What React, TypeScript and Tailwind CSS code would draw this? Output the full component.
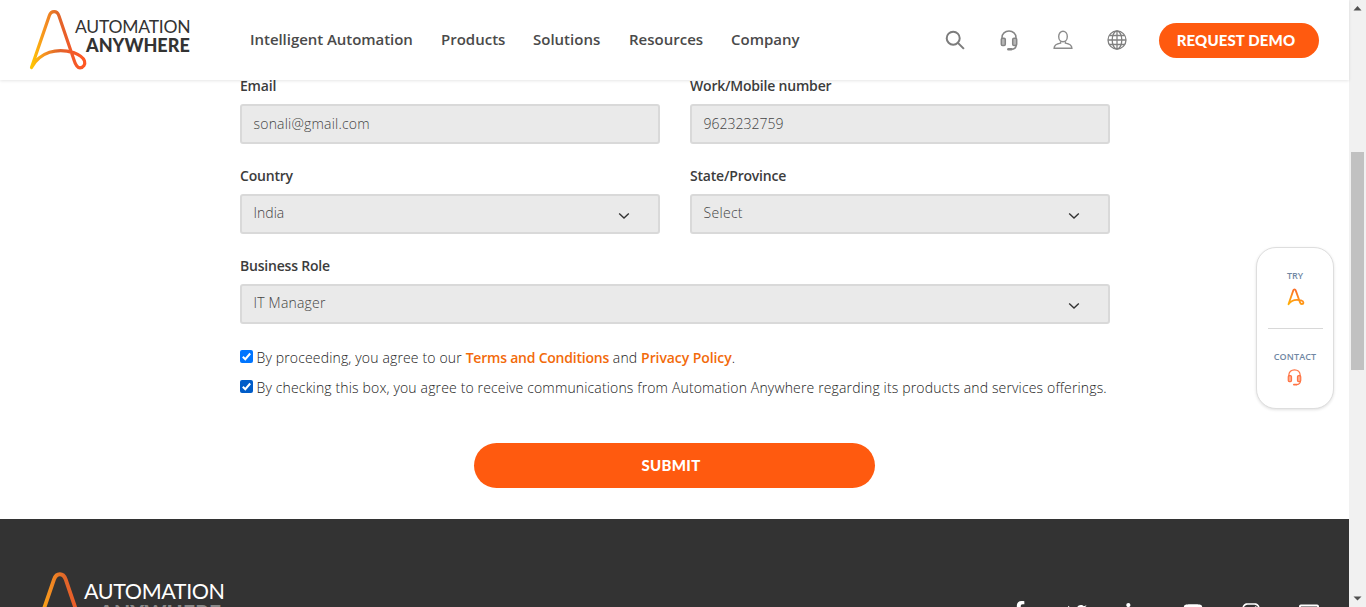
import React from "react";
import { FaFacebookF, FaTwitter, FaLinkedinIn, FaYoutube, FaInstagram, FaRegEnvelope } from "react-icons/fa";

function Mark({ className, id, width = 3.2 }: { className: string; id: string; width?: number }) {
  return (
    <svg className={className} viewBox="0 0 58 60" fill="none">
      <defs>
        <linearGradient id={id} x1="2" y1="0" x2="56" y2="0" gradientUnits="userSpaceOnUse">
          <stop offset="0" stopColor="#ffc800" />
          <stop offset="0.25" stopColor="#f69220" />
          <stop offset="0.5" stopColor="#e0662a" />
          <stop offset="0.75" stopColor="#f15a29" />
          <stop offset="1" stopColor="#ff5722" />
        </linearGradient>
      </defs>
      <path
        d="M2.500 57.500 L20.200 6 C22.200 0.200 28 0.200 30 6 L45 50 C46.500 55 48 57.800 51 57.800 C54.500 57.800 56.500 54.500 55.500 51 C54.100 46.800 50 44.800 44.500 42.600 C28 37.500 11 42 2.500 57.500 Z"
        stroke={`url(#${id})`}
        strokeWidth={width}
        strokeLinejoin="round"
      />
    </svg>
  );
}

function TryMark() {
  return (
    <svg className="mt-[6px] ml-px h-[18px] w-[18px]" viewBox="0 0 18 18" fill="none" stroke="url(#tryFill)" strokeWidth="1.800" strokeLinejoin="round">
      <defs>
        <linearGradient id="tryFill" x1="0" y1="18" x2="8" y2="0" gradientUnits="userSpaceOnUse">
          <stop offset="0" stopColor="#ffb800" />
          <stop offset="0.6" stopColor="#ff8a1c" />
          <stop offset="1" stopColor="#f9692c" />
        </linearGradient>
      </defs>
      <path d="M1.500 16.300 6.300 2.400c.5-1.500 1.900-1.500 2.400 0l4.200 11.700c.4 1.200 1 1.900 1.900 1.900.9 0 1.600-.7 1.600-1.600 0-1-1-1.600-2.400-2C9 11.100 4.500 11.900 1.500 16.300Z" />
    </svg>
  );
}

function Headset({ className }: { className: string }) {
  return (
    <svg className={className} viewBox="0 0 18 21" fill="none" stroke="currentColor" strokeWidth="1.500">
      <path d="M2 9V7.600C2 3.700 5 1 9 1s7 2.700 7 6.600V9" />
      <rect x="1.300" y="8.300" width="4" height="7.200" rx="1.300" fill="currentColor" fillOpacity="0.6" />
      <rect x="12.700" y="8.300" width="4" height="7.200" rx="1.300" fill="currentColor" fillOpacity="0.6" />
      <path d="M16.300 14.500c0 3-1.800 4.800-5.300 4.800" />
      <path d="M8.300 19.300h3" strokeWidth="2.400" strokeLinecap="round" />
    </svg>
  );
}

function Chevron() {
  return (
    <svg className="mt-[3px] h-[8px] w-[12px]" viewBox="0 0 12 8" fill="none" stroke="#333" strokeWidth="1.400">
      <path d="M1.200 1.500 6 6l4.800-4.500" />
    </svg>
  );
}

function Field({ label, value, select, className = "", valueClass = "" }: { label: string; value: string; select?: boolean; className?: string; valueClass?: string }) {
  return (
    <div className={className}>
      <div className="h-5 text-[14px] leading-5 font-semibold tracking-[-0.200px] whitespace-nowrap text-[#3c3c3c]">{label}</div>
      <div className="mt-2 flex h-10 items-center justify-between rounded-[3px] border-2 border-[#d9d9d9] bg-[#eaeaea] pr-[28px] pl-[11.5px] text-[14px] leading-5 font-light text-[#444]">
        <span className={`${select ? "pb-[2px]" : ""} ${valueClass}`}>{value}</span>
        {select && <Chevron />}
      </div>
    </div>
  );
}

function Check({ color }: { color: string }) {
  return (
    <svg className="mt-[3px] mr-[3.5px] h-[13px] w-[13px] shrink-0" viewBox="0 0 13 13">
      <rect width="13" height="13" rx="2" fill={color} />
      <path d="M2.800 6.700 5.300 9.200 10.200 3.500" fill="none" stroke="#fff" strokeWidth="2" />
    </svg>
  );
}

export default function App() {
  return (
    <div className="flex h-[607px] w-[1366px] overflow-hidden bg-white font-['Open_Sans','Noto_Sans',sans-serif]">
      <div className="relative flex h-full w-[1349px] flex-col">
        <header className="relative z-10 flex h-20 shrink-0 items-center bg-white pl-[29px] shadow-[0_1px_3px_rgba(0,0,0,0.1)]">
          <div className="flex h-[60px] w-[221px] items-start">
            <Mark id="headMark" className="h-[60px] w-[58px] shrink-0" />
            <div className="-ml-[12px] pt-[8px] text-[#333] font-['Lato',sans-serif]">
              <div className="h-[18px] text-[17.500px] leading-[18px] tracking-[-0.230px] whitespace-nowrap">AUTOMATION</div>
              <div className="h-[18px] pl-[11px] text-[18px] leading-[18px] font-black tracking-[0px] whitespace-nowrap">ANYWHERE</div>
            </div>
          </div>
          <nav className="flex pb-[2px] text-[15px] leading-5 font-semibold whitespace-nowrap text-[#4a4a4a]">
            <span className="w-[191px] tracking-[-0.050px]">Intelligent Automation</span>
            <span className="w-[92px]">Products</span>
            <span className="w-[96px]">Solutions</span>
            <span className="w-[102px]">Resources</span>
            <span className="w-[214px]">Company</span>
          </nav>
          <svg className="h-[20px] w-[20px]" viewBox="0 0 20 20" fill="none" stroke="#7c7c7c" strokeWidth="2">
            <circle cx="8.200" cy="8.200" r="6.500" />
            <path d="m12.900 12.900 6 6" />
          </svg>
          <Headset className="ml-[35px] h-[21px] w-[18px] text-[#858585]" />
          <svg className="ml-[35px] h-[20px] w-[20px]" viewBox="0 0 20 20" fill="none" stroke="#8c8c8c" strokeWidth="1.400">
            <ellipse cx="10" cy="6.500" rx="4.300" ry="5.300" />
            <path d="M7.600 11.200v1.900c-3.600.6-6.500 1.700-6.500 5.200h17.800c0-3.500-2.900-4.600-6.500-5.200v-1.900" />
          </svg>
          <svg className="ml-[34px] h-[20px] w-[20px]" viewBox="0 0 20 20" fill="none" stroke="#808080" strokeWidth="1.300">
            <circle cx="10" cy="10" r="9" />
            <ellipse cx="10" cy="10" rx="4.800" ry="9" />
            <path d="M10 1v18M1 10h18M2.500 5.500h15M2.500 14.500h15" />
          </svg>
          <button className="ml-[32px] h-[35px] w-[160px] rounded-full bg-[#ff5a0f] pr-[6px] font-['Lato',sans-serif] text-[15px] font-black tracking-[0.130px] whitespace-nowrap text-white">REQUEST DEMO</button>
        </header>

        <main className="flex h-[439px] shrink-0 flex-col">
          <form className="-mt-1 ml-[240px] flex w-[870px] flex-col">
            <div className="grid grid-cols-2 gap-x-[30px] gap-y-[22px]">
              <Field label="Email" value="sonali@gmail.com" valueClass="tracking-[0.200px]" />
              <Field label="Work/Mobile number" value="9623232759" />
              <Field label="Country" value="India" select />
              <Field label="State/Province" value="Select" select valueClass="tracking-[0.300px]" />
              <Field className="col-span-2" label="Business Role" value="IT Manager" select valueClass="tracking-[0.200px]" />
            </div>
            <div className="mt-[23px] flex h-[30px] text-[14px] leading-[21px] font-light tracking-[0.150px] whitespace-nowrap text-[#222]">
              <Check color="#0075ff" />
              <p>By proceeding, you agree to our <a className="font-semibold tracking-[-0.220px] text-[#f26a0a]">Terms and Conditions</a> and <a className="font-semibold tracking-[-0.080px] text-[#f26a0a]">Privacy Policy</a>.</p>
            </div>
            <div className="flex h-[30px] text-[14px] leading-[21px] font-light tracking-[0.150px] whitespace-nowrap text-[#222]">
              <Check color="#005cc8" />
              <p>By checking this box, you agree to receive communications from Automation Anywhere regarding its products and services offerings.</p>
            </div>
            <button type="button" className="mt-[36px] ml-[234px] h-[45px] w-[401px] rounded-full bg-[#ff5a0f] pr-[7px] font-['Lato',sans-serif] text-[15px] font-black tracking-[0.300px] text-white">SUBMIT</button>
          </form>
        </main>

        <footer className="flex h-[88px] shrink-0 items-start justify-between overflow-hidden bg-[#333] pr-[30px] pl-[30px]">
          <div className="flex pt-[53px]">
            <Mark id="footMark" className="h-[72px] w-[69px] shrink-0" />
            <div className="-ml-[15px] pt-[6px] font-['Lato',sans-serif] text-white">
              <div className="h-[24px] text-[21.500px] leading-[26px] tracking-[-0.400px] whitespace-nowrap">AUTOMATION</div>
              <div className="h-[20px] pl-[15px] text-[21px] leading-[20px] font-black tracking-[0.150px] whitespace-nowrap text-[#888]">ANYWHERE</div>
            </div>
          </div>
          <div className="flex gap-[38px] pt-[82px] text-[20px] text-white">
            <FaFacebookF /><FaTwitter className="mt-[2px]" /><FaLinkedinIn className="mt-[2px]" /><FaYoutube /><FaInstagram className="mt-px" /><FaRegEnvelope className="mt-px" />
          </div>
        </footer>

        <aside className="absolute top-[247px] left-[1256px] flex h-[162px] w-[78px] flex-col items-center rounded-[20px] border border-[#dedede] bg-white text-[9px] leading-3 font-semibold text-[#7087a3] shadow-[0_1px_3px_rgba(0,0,0,0.12)]">
          <span className="mt-[22px]">TRY</span>
          <TryMark />
          <div className="mt-[22px] h-px w-[55px] bg-[#d8d8d8]" />
          <span className="mt-[22px] tracking-[0.150px]">CONTACT</span>
          <Headset className="mt-[6px] mr-px h-[17px] w-[15px] text-[#ff7444]" />
        </aside>
      </div>
      <div className="flex w-[17px] flex-col items-center bg-[#f1f1f1]">
        <svg className="h-[17px] w-[17px]" viewBox="0 0 17 17"><path d="M4.500 10.500h8l-4-4.500z" fill="#505050" /></svg>
        <div className="mt-[135px] h-[218px] w-[13px] bg-[#c1c1c1]" />
        <svg className="mt-auto h-[17px] w-[17px]" viewBox="0 0 17 17"><path d="M4.500 6.500h8l-4 4z" fill="#505050" /></svg>
      </div>
    </div>
  );
}
